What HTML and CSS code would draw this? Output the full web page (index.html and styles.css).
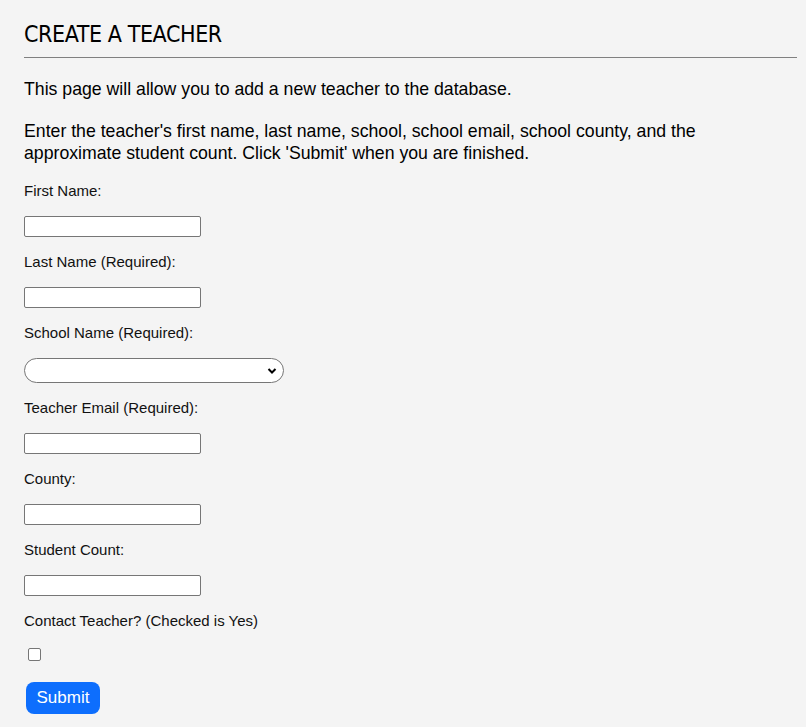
FILE: index.html
```html
<!DOCTYPE html>
<html>
<head>
<meta charset="utf-8">
<link rel="stylesheet" href="styles.css">
</head>
<body>
<main class="page">
  <h1 class="title">CREATE A TEACHER</h1>
  <p class="intro">This page will allow you to add a new teacher to the database.</p>
  <p class="intro">Enter the teacher's first name, last name, school, school email, school county, and the approximate student count. Click 'Submit' when you are finished.</p>
  <form class="form">
    <label class="label">First Name:</label>
    <input class="field" type="text">
    <label class="label">Last Name (Required):</label>
    <input class="field" type="text">
    <label class="label">School Name (Required):</label>
    <div class="select">
      <svg class="chev" width="10" height="8" viewBox="0 0 10 8"><path d="M1.5 2 L5 5.5 L8.5 2" fill="none" stroke="#000" stroke-width="2"/></svg>
    </div>
    <label class="label">Teacher Email (Required):</label>
    <input class="field" type="text">
    <label class="label">County:</label>
    <input class="field" type="text">
    <label class="label">Student Count:</label>
    <input class="field" type="text">
    <label class="label">Contact Teacher? (Checked is Yes)</label>
    <span class="check"></span>
    <button class="submit" type="button">Submit</button>
  </form>
</main>
</body>
</html>
```
FILE: styles.css
```css
html, body {
  margin: 0;
  padding: 0;
  background: #f4f4f4;
}
.page {
  padding: 0 9px 0 24px;
  font-family: "Liberation Sans", Arial, sans-serif;
  color: #000;
}
.title {
  margin: 0;
  padding-top: 21px;
  padding-bottom: 9px;
  font-family: "DejaVu Sans Condensed", "Liberation Sans", sans-serif;
  font-size: 23px;
  font-weight: normal;
  letter-spacing: -0.4px;
  line-height: 27px;
  border-bottom: 1px solid #808080;
}
.intro {
  margin: 20px 0 0 0;
  font-size: 17.7px;
  line-height: 22px;
}
.form {
  display: flex;
  flex-direction: column;
  align-items: flex-start;
  padding-top: 18px;
}
.label {
  font-size: 15px;
  line-height: 18px;
  margin-bottom: 16px;
  display: block;
  color: #111;
}
.field {
  box-sizing: border-box;
  width: 177px;
  height: 21px;
  margin: 0 0 16.2px 0;
  padding: 0 4px;
  border: 1px solid #767676;
  border-radius: 2px;
  background: #fff;
}
.select {
  box-sizing: border-box;
  width: 260px;
  height: 25px;
  margin-bottom: 15.2px;
  border: 1px solid #767676;
  border-radius: 13px;
  background: #fff;
  display: flex;
  align-items: center;
  justify-content: flex-end;
  padding-right: 6px;
}
.check {
  box-sizing: border-box;
  width: 13px;
  height: 13px;
  margin: 2px 0 21px 4px;
  border: 1px solid #767676;
  border-radius: 2px;
  background: #fff;
}
.submit {
  margin-left: 2px;
  width: 74px;
  height: 32px;
  border: none;
  border-radius: 8px;
  background: #0d6efd;
  color: #fff;
  font-family: "Liberation Sans", Arial, sans-serif;
  font-size: 17px;
  padding: 0;
}
```
